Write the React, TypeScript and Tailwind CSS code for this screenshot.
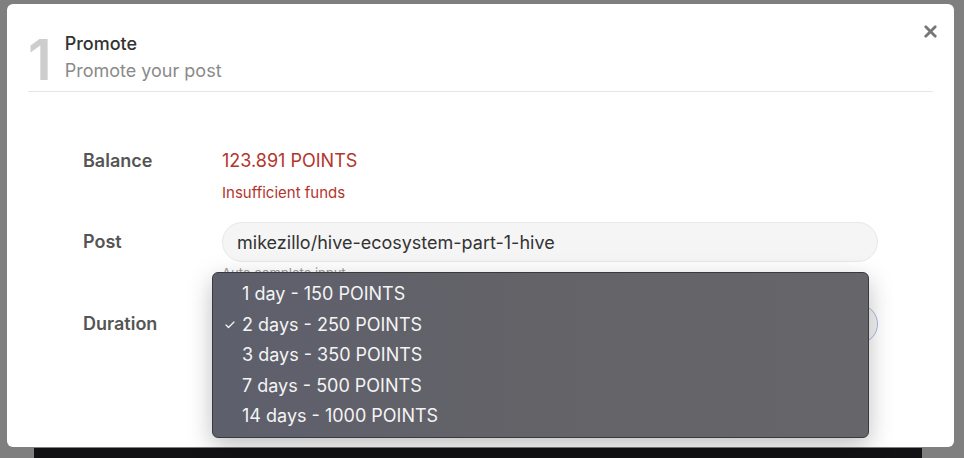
import { X, Check } from 'lucide-react';

const durations = [
  { label: '1 day - 150 POINTS', selected: false },
  { label: '2 days - 250 POINTS', selected: true },
  { label: '3 days - 350 POINTS', selected: false },
  { label: '7 days - 500 POINTS', selected: false },
  { label: '14 days - 1000 POINTS', selected: false },
];

function DurationMenu() {
  return (
    <div className="absolute left-[205px] top-[268px] w-[657px] h-[166px] rounded-[6px] border border-[#3a3a3e] bg-gradient-to-r from-[#5d5f6c] via-[#646368] to-[#666569] shadow-[0_8px_24px_rgba(0,0,0,0.25)] pt-[6px]">
      {durations.map((d) => (
        <div key={d.label} className="h-[30.5px] flex items-center text-[18px] text-[#f4f4f4] leading-none">
          <span className="w-[29px] flex justify-end pr-[6px]">
            {d.selected && <Check className="w-[12px] h-[12px]" strokeWidth={2.5} />}
          </span>
          <span>{d.label}</span>
        </div>
      ))}
    </div>
  );
}

export default function App() {
  return (
    <div className="w-[964px] h-[458px] bg-[#7f7f7f] overflow-hidden pt-[4px] font-['Inter','Liberation_Sans',sans-serif]">
      {/* Promote dialog */}
      <div className="relative ml-[7px] w-[947px] h-[443px] bg-white rounded-[6px] px-[21px]">
        <button className="absolute right-[14px] top-[18px] text-[#777]">
          <X className="w-[19px] h-[19px]" strokeWidth={3.5} />
        </button>

        {/* Step header */}
        <div className="flex items-start gap-[13px] pt-[27px] pb-[5px] border-b border-[#e6e6e6]">
          <span className="text-[56px] leading-[52px] font-semibold text-[#cdcdcd] mt-[3px]">1</span>
          <div className="flex flex-col">
            <span className="text-[18px] leading-[26px] font-medium text-[#333]">Promote</span>
            <span className="text-[18px] leading-[26px] text-[#8a8a8a] mt-[1px]">Promote your post</span>
          </div>
        </div>

        {/* Form */}
        <div className="pl-[55px] pr-[55px] pt-[56px] flex flex-col">
          <div className="flex">
            <span className="w-[139px] text-[18px] leading-[26px] font-semibold text-[#555]">Balance</span>
            <div className="flex flex-col">
              <span className="text-[18px] leading-[26px] text-[#b3352d]">123.891 POINTS</span>
              <span className="text-[15px] leading-[20px] text-[#b3352d] mt-[9px]">Insufficient funds</span>
            </div>
          </div>

          <div className="flex items-center mt-[19px]">
            <span className="w-[139px] text-[18px] leading-[26px] font-semibold text-[#555]">Post</span>
            <div className="flex-1 h-[40px] rounded-full bg-[#f5f5f5] border border-[#e8e8e8] flex items-center px-[14px] text-[18px] text-[#333]">
              mikezillo/hive-ecosystem-part-1-hive
            </div>
          </div>
          <div className="pl-[139px] mt-[2px] text-[13px] leading-[18px] text-[#999]">Auto complete input</div>

          <div className="flex items-center mt-[22px]">
            <span className="w-[139px] text-[18px] leading-[26px] font-semibold text-[#555]">Duration</span>
            <div className="flex-1 h-[40px] rounded-full bg-[#f5f5f5] border border-[#a9b4e8]" />
          </div>
        </div>

        <DurationMenu />
      </div>

      {/* page content behind the overlay */}
      <div className="ml-[34px] mt-[1px] w-[888px] h-[20px] bg-[#121214]" />
    </div>
  );
}
